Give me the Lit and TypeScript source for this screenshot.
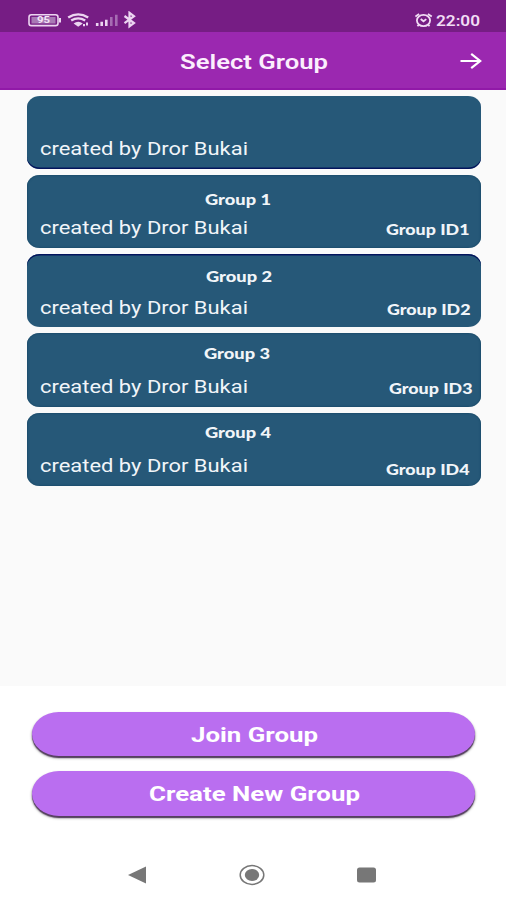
import { LitElement, html, css, nothing } from "lit";
import { customElement, property } from "lit/decorators.js";
import { styleMap } from "lit/directives/style-map.js";

interface Group {
  name: string;
  id: string;
  nameX: number;
  nameY: number;
  idRight: number;
  idY: number;
  edge: "none" | "top" | "bottom";
}

const GROUPS: Group[] = [
  { name: "", id: "", nameX: 178, nameY: 16, idRight: 11, idY: 46, edge: "bottom" },
  { name: "Group 1", id: "Group ID1", nameX: 178.7, nameY: 16.5, idRight: 11, idY: 46, edge: "none" },
  { name: "Group 2", id: "Group ID2", nameX: 179, nameY: 13.5, idRight: 10, idY: 46.5, edge: "top" },
  { name: "Group 3", id: "Group ID3", nameX: 177, nameY: 12, idRight: 8.5, idY: 47, edge: "none" },
  { name: "Group 4", id: "Group ID4", nameX: 178.2, nameY: 11.5, idRight: 11.5, idY: 48.5, edge: "none" },
];

/** Text set in a horizontally expanded face, fitted to a fixed width. */
@customElement("wide-text")
class WideText extends LitElement {
  @property({ type: Number }) width = 100;

  static styles = css`
    :host { display: block; white-space: nowrap; flex: none; text-align: left; }
    .text { display: inline-block; transform-origin: 0 50%; }
  `;

  render() {
    return html`<span class="text"><slot></slot></span>`;
  }

  private fit() {
    const el = this.renderRoot.querySelector<HTMLElement>(".text");
    if (!el) return;
    el.style.transform = "none";
    const natural = el.getBoundingClientRect().width;
    if (natural > 0) el.style.transform = `scaleX(${this.width / natural})`;
  }

  updated() {
    this.style.width = `${this.width}px`;
    this.fit();
    document.fonts?.ready.then(() => this.fit());
  }
}

@customElement("group-card")
class GroupCard extends LitElement {
  @property({ attribute: false }) group!: Group;

  static styles = css`
    :host { display: block; }
    .card {
      box-sizing: border-box;
      height: 73.3px;
      border-radius: 13px / 11px;
      background: #265878;
      box-shadow: inset 0 0 1.5px 0.5px #174766;
      display: grid;
      grid-template-columns: 1fr auto;
      grid-template-rows: 41.5px 1fr;
      color: #f1f5f9;
    }
    .bottom { box-shadow: inset 0 -1.5px 0 #03145c; }
    .top { box-shadow: inset 0 1.5px 0 #03145c; }
    .name, .id { font: 900 14.5px/18px Lato, Carlito, sans-serif; }
    .name { grid-column: 1 / 3; }
    .by { font: 400 17.5px/24px Roboto, sans-serif; padding-left: 13.5px; }
  `;

  render() {
    const g = this.group;
    return html`<div class="card ${g.edge}">
      <div class="name" style=${styleMap({ paddingLeft: `${g.nameX}px`, paddingTop: `${g.nameY}px` })}>
        ${g.name ? html`<wide-text .width=${66}>${g.name}</wide-text>` : nothing}
      </div>
      <div class="by"><wide-text .width=${208}>created by Dror Bukai</wide-text></div>
      <div class="id" style=${styleMap({ paddingRight: `${g.idRight}px`, paddingTop: `${g.idY - 41.5}px` })}>
        ${g.id ? html`<wide-text .width=${83.5}>${g.id}</wide-text>` : nothing}
      </div>
    </div>`;
  }
}

@customElement("app-root")
class AppRoot extends LitElement {
  static styles = css`
    :host {
      display: flex;
      flex-direction: column;
      height: 900px;
      background: #fff;
      font-family: Roboto, sans-serif;
      overflow: hidden;
    }
    svg { display: block; flex: none; }
    .status {
      height: 32px;
      flex: none;
      box-sizing: border-box;
      background: #761d84;
      display: flex;
      align-items: center;
      padding: 8px 26px 0 28px;
      justify-content: space-between;
    }
    .clock { display: flex; align-items: center; gap: 3px; color: #f1dcf4; font: 600 15px/20px Roboto, sans-serif; }
    .clock wide-text { padding-top: 1px; }
    .bar {
      height: 57.5px;
      flex: none;
      box-sizing: border-box;
      background: #9b28b0;
      border-bottom: 2px solid #9119a8;
      display: grid;
      grid-template-columns: 180px 1fr 46px;
      align-items: center;
      color: #fbeefd;
      font: 600 20.5px/28px Roboto, sans-serif;
    }
    .bar svg { margin-top: 2px; }
    .title { grid-column: 2; padding-top: 5px; }
    .list {
      flex: none;
      height: 596.5px;
      box-sizing: border-box;
      background: #fafafa;
      padding: 6px 25.5px 0 26.5px;
      display: flex;
      flex-direction: column;
      gap: 6px;
    }
    .actions { flex: none; padding: 25.5px 31px 0 32px; display: flex; flex-direction: column; gap: 15px; }
    .button {
      border: 0;
      padding: 1.5px 0 0 1px;
      height: 44.5px;
      border-radius: 27px / 22.25px;
      background: #ba6ef0;
      box-shadow: 0 2px 1px #55405f, 0 2px 3px rgba(0, 0, 0, 0.45);
      display: flex;
      align-items: center;
      justify-content: center;
      color: #fff;
      font: 700 20.5px/28px Roboto, sans-serif;
    }
    .nav { margin-top: auto; height: 50px; padding: 0 130px 0 128px; display: flex; align-items: center; justify-content: space-between; }
  `;

  render() {
    return html`
      <div class="status">
        <svg width="110" height="18" viewBox="28 11 110 18" fill="none" stroke="#ecd5f1">
          <rect x="29" y="14.8" width="29" height="10.8" rx="2.4" stroke-width="1.6" />
          <rect x="31.5" y="17" width="24" height="6.5" fill="#a879b5" stroke="none" />
          <path d="M60 18v4.5" stroke-width="2" />
          <text x="37" y="23.3" font-family="Roboto, sans-serif" font-weight="700" font-size="8.5" textLength="13" lengthAdjust="spacingAndGlyphs" fill="#f3e4f6" stroke="none">95</text>
          <path d="M68.2 17.6q10-6.4 20 0M71.2 20.5q7-4.2 14 0" stroke-width="2.4" />
          <path d="M73.6 23.4q4.6-3.2 9.2 0l-4.6 3.4z" fill="#ecd5f1" stroke="none" />
          <path d="M84 26.2v-2.2M87 25.6v-3" stroke-width="2" />
          <path d="M97.2 26v-3M101.7 26v-4.2M106.3 26v-6.2" stroke-width="2.6" />
          <path d="M111.3 26v-9M116.3 26V14.8" stroke="#a66cb3" stroke-width="2.6" />
          <path d="M124.5 16l9.5 7-4.5 3.4V12.8l4.5 3.4-9.5 7" stroke-width="2.2" />
        </svg>
        <div class="clock">
          <svg width="18" height="16" viewBox="0 0 18 16" fill="none" stroke="#f1dcf4" stroke-width="1.8">
            <ellipse cx="8.5" cy="8.5" rx="6.6" ry="5.6" />
            <path d="M5.7 7l2.8 2.3 2.8-2.2M.4 4.6L4.1 2M16.8 4.6L12.9 2M3.9 12.5l-1.4 1.8M13.1 12.5l1.4 1.8" />
          </svg>
          <wide-text .width=${44}>22:00</wide-text>
        </div>
      </div>
      <div class="bar">
        <div class="title"><wide-text .width=${148}>Select Group</wide-text></div>
        <svg width="22" height="18" viewBox="0 0 22 18" fill="none" stroke="#fff" stroke-width="2.2">
          <path d="M.5 9H20M11.2 1.8L20.2 9l-9 7.2" />
        </svg>
      </div>
      <div class="list">${GROUPS.map((g) => html`<group-card .group=${g}></group-card>`)}</div>
      <div class="actions">
        <button class="button"><wide-text .width=${127}>Join Group</wide-text></button>
        <button class="button"><wide-text .width=${211}>Create New Group</wide-text></button>
      </div>
      <div class="nav">
        <svg width="19" height="18" viewBox="0 0 19 18"><path d="M0 9L18 .5v17z" fill="#777" /></svg>
        <svg width="26" height="22" viewBox="0 0 26 22">
          <ellipse cx="13" cy="11" rx="11.8" ry="9.4" fill="none" stroke="#777" stroke-width="1.5" />
          <ellipse cx="13" cy="11" rx="7.2" ry="5.9" fill="#777" />
        </svg>
        <svg width="19" height="16" viewBox="0 0 19 16"><rect y=".5" width="19" height="15" rx="2.5" fill="#777" /></svg>
      </div>
    `;
  }
}
